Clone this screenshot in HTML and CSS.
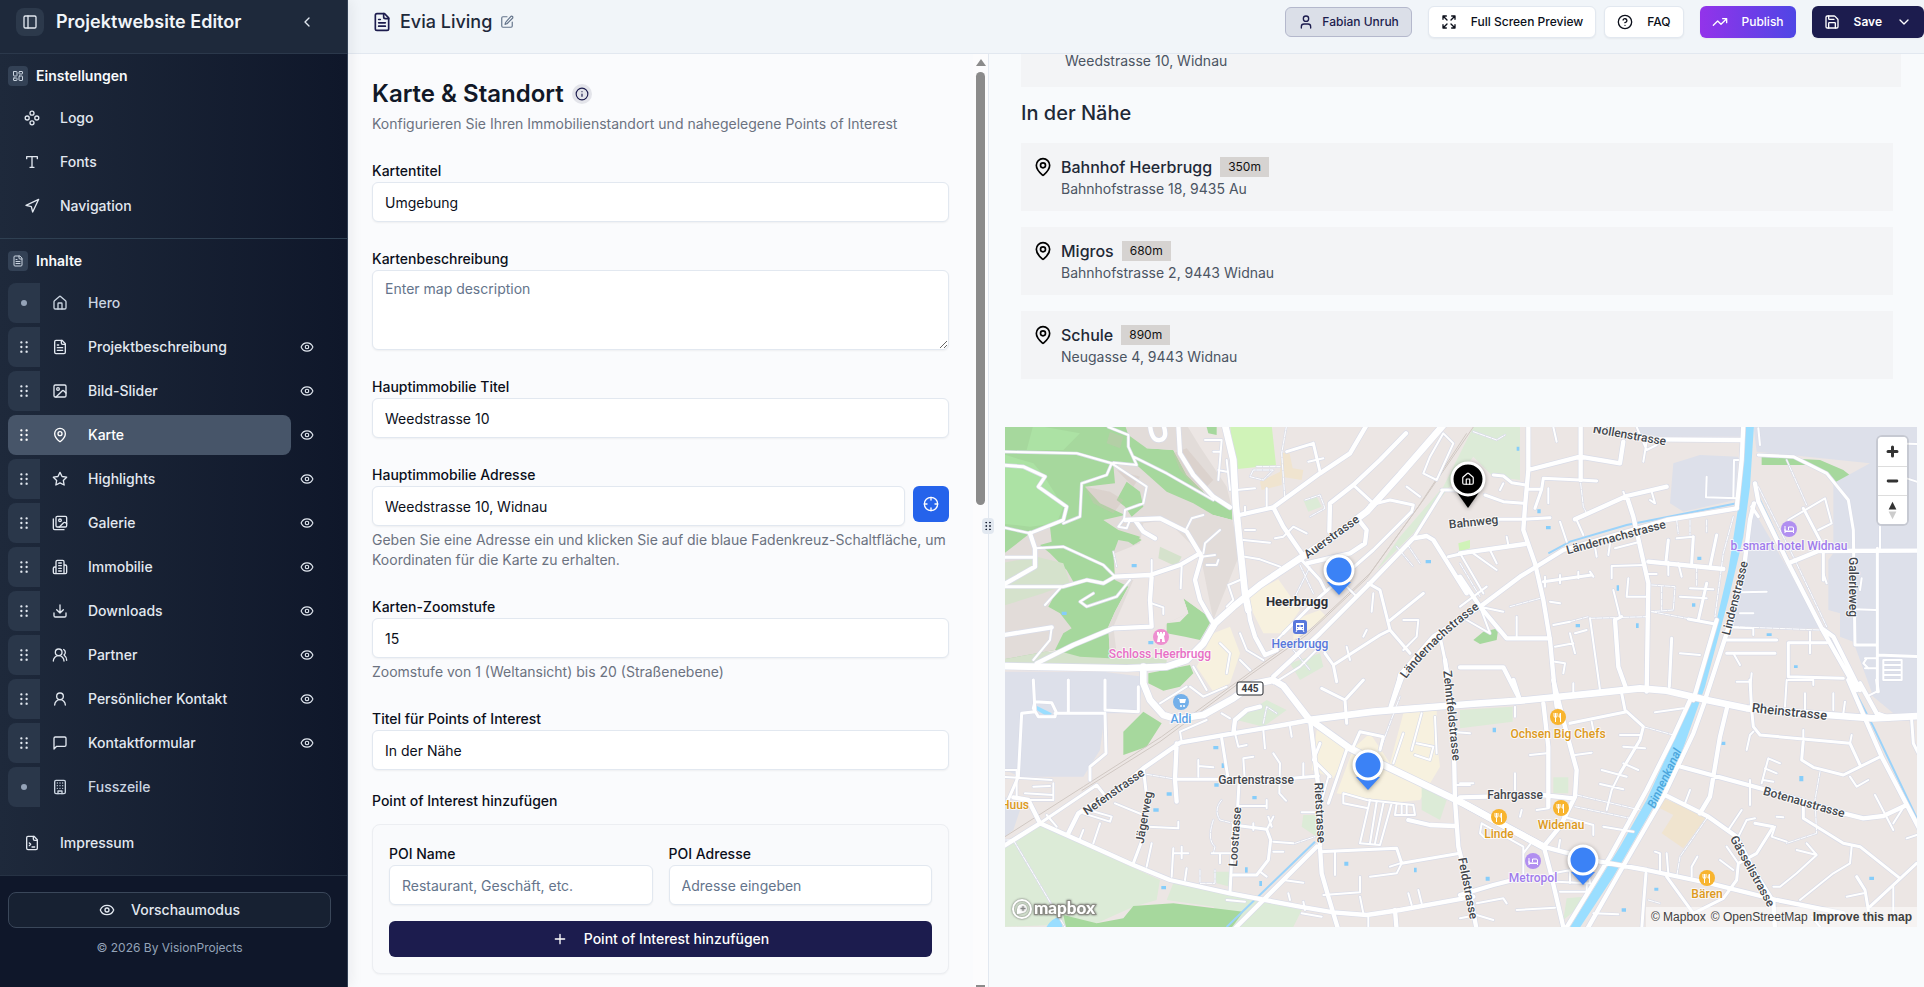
FILE: index.html
```html
<!DOCTYPE html>
<html lang="de">
<head>
<meta charset="utf-8">
<title>Projektwebsite Editor</title>
<link rel="stylesheet" href="styles.css">
</head>
<body>
<svg class="defs" aria-hidden="true">
  <symbol id="i-panel" viewBox="0 0 24 24"><rect x="3" y="3" width="18" height="18" rx="2"/><path d="M9 3v18"/></symbol>
  <symbol id="i-left" viewBox="0 0 24 24"><path d="m15 18-6-6 6-6"/></symbol>
  <symbol id="i-down" viewBox="0 0 24 24"><path d="m6 9 6 6 6-6"/></symbol>
  <symbol id="i-dash" viewBox="0 0 24 24"><rect x="3" y="3" width="7" height="9" rx="1"/><rect x="14" y="3" width="7" height="5" rx="1"/><rect x="14" y="12" width="7" height="9" rx="1"/><rect x="3" y="16" width="7" height="5" rx="1"/></symbol>
  <symbol id="i-comp" viewBox="0 0 24 24"><circle cx="12" cy="4.8" r="3"/><circle cx="12" cy="19.2" r="3"/><circle cx="4.8" cy="12" r="3"/><circle cx="19.2" cy="12" r="3"/></symbol>
  <symbol id="i-type" viewBox="0 0 24 24"><path d="M4 7V4h16v3M9 20h6M12 4v16"/></symbol>
  <symbol id="i-nav" viewBox="0 0 24 24"><path d="m3 11 19-9-9 19-2-8z"/></symbol>
  <symbol id="i-file" viewBox="0 0 24 24"><path d="M15 2H6a2 2 0 0 0-2 2v16a2 2 0 0 0 2 2h12a2 2 0 0 0 2-2V7z"/><path d="M14 2v4a2 2 0 0 0 2 2h4M10 9H8M16 13H8M16 17H8"/></symbol>
  <symbol id="i-home" viewBox="0 0 24 24"><path d="M15 21v-8a1 1 0 0 0-1-1h-4a1 1 0 0 0-1 1v8"/><path d="M3 10a2 2 0 0 1 .7-1.5l7-6a2 2 0 0 1 2.6 0l7 6A2 2 0 0 1 21 10v9a2 2 0 0 1-2 2H5a2 2 0 0 1-2-2z"/></symbol>
  <symbol id="i-image" viewBox="0 0 24 24"><rect x="3" y="3" width="18" height="18" rx="2"/><circle cx="9" cy="9" r="2"/><path d="m21 15-3.1-3.1a2 2 0 0 0-2.8 0L6 21"/></symbol>
  <symbol id="i-pin" viewBox="0 0 24 24"><path d="M20 10c0 5-5.5 10.200-7.400 11.800a1 1 0 0 1-1.200 0C9.500 20.200 4 15 4 10a8 8 0 0 1 16 0"/><circle cx="12" cy="10" r="3"/></symbol>
  <symbol id="i-star" viewBox="0 0 24 24"><path d="m12 2 3.100 6.300 6.900 1-5 4.900 1.200 6.800L12 17.800 5.800 21 7 14.200 2 9.300l6.900-1z"/></symbol>
  <symbol id="i-images" viewBox="0 0 24 24"><path d="M18 22H4a2 2 0 0 1-2-2V6"/><path d="m22 13-1.300-1.300a2.400 2.400 0 0 0-3.400 0L11 18"/><circle cx="12" cy="8" r="2"/><rect x="6" y="2" width="16" height="16" rx="2"/></symbol>
  <symbol id="i-build2" viewBox="0 0 24 24"><path d="M6 22V4a2 2 0 0 1 2-2h8a2 2 0 0 1 2 2v18ZM6 12H4a2 2 0 0 0-2 2v6a2 2 0 0 0 2 2h2M18 9h2a2 2 0 0 1 2 2v9a2 2 0 0 1-2 2h-2M10 6h4M10 10h4M10 14h4M10 18h4"/></symbol>
  <symbol id="i-dl" viewBox="0 0 24 24"><path d="M21 15v4a2 2 0 0 1-2 2H5a2 2 0 0 1-2-2v-4M7 10l5 5 5-5M12 15V3"/></symbol>
  <symbol id="i-users" viewBox="0 0 24 24"><path d="M18 21a8 8 0 0 0-16 0"/><circle cx="10" cy="8" r="5"/><path d="M22 20c0-3.400-2-6.500-4-8a5 5 0 0 0-.5-8.300"/></symbol>
  <symbol id="i-user" viewBox="0 0 24 24"><circle cx="12" cy="8" r="5"/><path d="M20 21a8 8 0 0 0-16 0"/></symbol>
  <symbol id="i-usersq" viewBox="0 0 24 24"><circle cx="12" cy="7" r="4"/><path d="M19 21v-2a4 4 0 0 0-4-4H9a4 4 0 0 0-4 4v2"/></symbol>
  <symbol id="i-msg" viewBox="0 0 24 24"><path d="M21 15a2 2 0 0 1-2 2H7l-4 4V5a2 2 0 0 1 2-2h14a2 2 0 0 1 2 2z"/></symbol>
  <symbol id="i-build" viewBox="0 0 24 24"><rect x="4" y="2" width="16" height="20" rx="2"/><path d="M9 22v-4h6v4M8 6h.01M16 6h.01M12 6h.01M12 10h.01M12 14h.01M16 10h.01M16 14h.01M8 10h.01M8 14h.01"/></symbol>
  <symbol id="i-term" viewBox="0 0 24 24"><path d="M15 2H6a2 2 0 0 0-2 2v16a2 2 0 0 0 2 2h12a2 2 0 0 0 2-2V7z"/><path d="M14 2v4a2 2 0 0 0 2 2h4M8 16l2-2-2-2M12 18h4"/></symbol>
  <symbol id="i-eye" viewBox="0 0 24 24"><path d="M2.100 12.300a1 1 0 0 1 0-.7 10.700 10.700 0 0 1 19.800 0 1 1 0 0 1 0 .7 10.700 10.700 0 0 1-19.800 0"/><circle cx="12" cy="12" r="3"/></symbol>
  <symbol id="i-grip" viewBox="0 0 24 24"><g fill="currentColor"><circle cx="7.500" cy="4" r="1"/><circle cx="7.500" cy="12" r="1"/><circle cx="7.500" cy="20" r="1"/><circle cx="16.500" cy="4" r="1"/><circle cx="16.500" cy="12" r="1"/><circle cx="16.500" cy="20" r="1"/></g></symbol>
  <symbol id="i-edit" viewBox="0 0 24 24"><path d="M12 3H5a2 2 0 0 0-2 2v14a2 2 0 0 0 2 2h14a2 2 0 0 0 2-2v-7"/><path d="M18.400 2.600a2.100 2.100 0 0 1 3 3l-9 9a2 2 0 0 1-.9.500l-2.900.9.900-2.900a2 2 0 0 1 .5-.9z"/></symbol>
  <symbol id="i-info" viewBox="0 0 24 24"><circle cx="12" cy="12" r="10"/><path d="M12 16v-4M12 8h.01"/></symbol>
  <symbol id="i-expand" viewBox="0 0 24 24"><path d="m15 15 6 6M15 9l6-6M21 16v5h-5M21 8V3h-5M3 16v5h5M3 21l6-6M3 8V3h5M9 9 3 3"/></symbol>
  <symbol id="i-help" viewBox="0 0 24 24"><circle cx="12" cy="12" r="10"/><path d="M9.100 9a3 3 0 0 1 5.800 1c0 2-3 3-3 3M12 17h.01"/></symbol>
  <symbol id="i-trend" viewBox="0 0 24 24"><path d="m22 7-8.500 8.500-5-5L2 17M16 7h6v6"/></symbol>
  <symbol id="i-save" viewBox="0 0 24 24"><path d="M15.200 3a2 2 0 0 1 1.400.6l3.800 3.800a2 2 0 0 1 .6 1.400V19a2 2 0 0 1-2 2H5a2 2 0 0 1-2-2V5a2 2 0 0 1 2-2z"/><path d="M17 21v-7a1 1 0 0 0-1-1H8a1 1 0 0 0-1 1v7M7 3v4a1 1 0 0 0 1 1h7"/></symbol>
  <symbol id="i-cross" viewBox="0 0 24 24"><circle cx="12" cy="12" r="10"/><path d="M22 12h-4M6 12H2M12 6V2M12 22v-4"/></symbol>
  <symbol id="i-plus" viewBox="0 0 24 24"><path d="M5 12h14M12 5v14"/></symbol>
</svg>
<div class="app">
  <aside class="sidebar">
    <header class="side-head">
      <span class="logo-box"><svg class="ic"><use href="#i-panel"/></svg></span>
      <h1>Projektwebsite Editor</h1>
      <button class="icon-btn" aria-label="Einklappen"><svg class="ic"><use href="#i-left"/></svg></button>
    </header>
    <nav class="side-nav">
      <section class="side-section">
        <h2><span class="mini"><svg class="ic s12"><use href="#i-dash"/></svg></span>Einstellungen</h2>
        <a class="link" href="#"><svg class="ic"><use href="#i-comp"/></svg>Logo</a>
        <a class="link" href="#"><svg class="ic"><use href="#i-type"/></svg>Fonts</a>
        <a class="link" href="#"><svg class="ic"><use href="#i-nav"/></svg>Navigation</a>
      </section>
      <section class="side-section">
        <h2><span class="mini"><svg class="ic s12"><use href="#i-file"/></svg></span>Inhalte</h2>
        <div class="row dim"><span class="grip"><i class="dot"></i></span><a class="entry" href="#"><svg class="ic"><use href="#i-home"/></svg>Hero</a></div>
        <div class="row"><span class="grip"><svg class="ic s14"><use href="#i-grip"/></svg></span><a class="entry" href="#"><svg class="ic"><use href="#i-file"/></svg>Projektbeschreibung</a><button class="icon-btn" aria-label="Sichtbar"><svg class="ic s14"><use href="#i-eye"/></svg></button></div>
        <div class="row"><span class="grip"><svg class="ic s14"><use href="#i-grip"/></svg></span><a class="entry" href="#"><svg class="ic"><use href="#i-image"/></svg>Bild-Slider</a><button class="icon-btn" aria-label="Sichtbar"><svg class="ic s14"><use href="#i-eye"/></svg></button></div>
        <div class="row active"><span class="grip"><svg class="ic s14"><use href="#i-grip"/></svg></span><a class="entry" href="#"><svg class="ic"><use href="#i-pin"/></svg>Karte</a><button class="icon-btn" aria-label="Sichtbar"><svg class="ic s14"><use href="#i-eye"/></svg></button></div>
        <div class="row"><span class="grip"><svg class="ic s14"><use href="#i-grip"/></svg></span><a class="entry" href="#"><svg class="ic"><use href="#i-star"/></svg>Highlights</a><button class="icon-btn" aria-label="Sichtbar"><svg class="ic s14"><use href="#i-eye"/></svg></button></div>
        <div class="row"><span class="grip"><svg class="ic s14"><use href="#i-grip"/></svg></span><a class="entry" href="#"><svg class="ic"><use href="#i-images"/></svg>Galerie</a><button class="icon-btn" aria-label="Sichtbar"><svg class="ic s14"><use href="#i-eye"/></svg></button></div>
        <div class="row"><span class="grip"><svg class="ic s14"><use href="#i-grip"/></svg></span><a class="entry" href="#"><svg class="ic"><use href="#i-build2"/></svg>Immobilie</a><button class="icon-btn" aria-label="Sichtbar"><svg class="ic s14"><use href="#i-eye"/></svg></button></div>
        <div class="row"><span class="grip"><svg class="ic s14"><use href="#i-grip"/></svg></span><a class="entry" href="#"><svg class="ic"><use href="#i-dl"/></svg>Downloads</a><button class="icon-btn" aria-label="Sichtbar"><svg class="ic s14"><use href="#i-eye"/></svg></button></div>
        <div class="row"><span class="grip"><svg class="ic s14"><use href="#i-grip"/></svg></span><a class="entry" href="#"><svg class="ic"><use href="#i-users"/></svg>Partner</a><button class="icon-btn" aria-label="Sichtbar"><svg class="ic s14"><use href="#i-eye"/></svg></button></div>
        <div class="row"><span class="grip"><svg class="ic s14"><use href="#i-grip"/></svg></span><a class="entry" href="#"><svg class="ic"><use href="#i-user"/></svg>Persönlicher Kontakt</a><button class="icon-btn" aria-label="Sichtbar"><svg class="ic s14"><use href="#i-eye"/></svg></button></div>
        <div class="row"><span class="grip"><svg class="ic s14"><use href="#i-grip"/></svg></span><a class="entry" href="#"><svg class="ic"><use href="#i-msg"/></svg>Kontaktformular</a><button class="icon-btn" aria-label="Sichtbar"><svg class="ic s14"><use href="#i-eye"/></svg></button></div>
        <div class="row dim"><span class="grip"><i class="dot"></i></span><a class="entry" href="#"><svg class="ic"><use href="#i-build"/></svg>Fusszeile</a></div>
        <a class="link last" href="#"><svg class="ic"><use href="#i-term"/></svg>Impressum</a>
      </section>
    </nav>
    <footer class="side-foot">
      <button class="preview-btn"><svg class="ic"><use href="#i-eye"/></svg>Vorschaumodus</button>
      <p>© 2026 By VisionProjects</p>
    </footer>
  </aside>

  <div class="main">
    <header class="toolbar">
      <div class="project"><svg class="ic s20"><use href="#i-file"/></svg><span>Evia Living</span><svg class="ic pencil"><use href="#i-edit"/></svg></div>
      <div class="actions">
        <button class="btn user"><svg class="ic"><use href="#i-usersq"/></svg>Fabian Unruh</button>
        <div class="pair">
          <button class="btn"><svg class="ic"><use href="#i-expand"/></svg>Full Screen Preview</button>
          <button class="btn"><svg class="ic"><use href="#i-help"/></svg>FAQ</button>
        </div>
        <button class="btn publish"><svg class="ic"><use href="#i-trend"/></svg>Publish</button>
        <button class="btn save"><svg class="ic"><use href="#i-save"/></svg>Save<svg class="ic"><use href="#i-down"/></svg></button>
      </div>
    </header>

    <div class="panes">
      <section class="editor">
        <form class="form">
          <div class="intro">
            <h2>Karte &amp; Standort <span class="info"><svg class="ic s14"><use href="#i-info"/></svg></span></h2>
            <p>Konfigurieren Sie Ihren Immobilienstandort und nahegelegene Points of Interest</p>
          </div>
          <div class="field"><label for="f1">Kartentitel</label><input id="f1" value="Umgebung"></div>
          <div class="field"><label for="f2">Kartenbeschreibung</label><textarea id="f2" placeholder="Enter map description"></textarea></div>
          <div class="field"><label for="f3">Hauptimmobilie Titel</label><input id="f3" value="Weedstrasse 10"></div>
          <div class="field"><label for="f4">Hauptimmobilie Adresse</label>
            <div class="inline"><input id="f4" value="Weedstrasse 10, Widnau"><button type="button" class="locate" aria-label="Koordinaten"><svg class="ic"><use href="#i-cross"/></svg></button></div>
            <p class="hint">Geben Sie eine Adresse ein und klicken Sie auf die blaue Fadenkreuz-Schaltfläche, um Koordinaten für die Karte zu erhalten.</p></div>
          <div class="field"><label for="f5">Karten-Zoomstufe</label><input id="f5" value="15"><p class="hint">Zoomstufe von 1 (Weltansicht) bis 20 (Straßenebene)</p></div>
          <div class="field"><label for="f6">Titel für Points of Interest</label><input id="f6" value="In der Nähe"></div>
          <fieldset class="poi">
            <legend>Point of Interest hinzufügen</legend>
            <div class="poi-card">
              <div class="two">
                <div class="field"><label for="f7">POI Name</label><input id="f7" placeholder="Restaurant, Geschäft, etc."></div>
                <div class="field"><label for="f8">POI Adresse</label><input id="f8" placeholder="Adresse eingeben"></div>
              </div>
              <button type="button" class="add"><svg class="ic"><use href="#i-plus"/></svg>Point of Interest hinzufügen</button>
            </div>
          </fieldset>
        </form>
        <div class="scroll" aria-hidden="true"><i class="up"></i><i class="thumb"></i><i class="rest"></i><i class="downarrow"></i></div>
        <span class="splitter"><svg class="ic s10"><use href="#i-grip"/></svg></span>
      </section>

      <section class="preview">
        <div class="places">
          <div class="main-place">Weedstrasse 10, Widnau</div>
          <h3>In der Nähe</h3>
          <ul>
            <li><svg class="ic s20"><use href="#i-pin"/></svg><div><h4>Bahnhof Heerbrugg <span>350m</span></h4><p>Bahnhofstrasse 18, 9435 Au</p></div></li>
            <li><svg class="ic s20"><use href="#i-pin"/></svg><div><h4>Migros <span>680m</span></h4><p>Bahnhofstrasse 2, 9443 Widnau</p></div></li>
            <li><svg class="ic s20"><use href="#i-pin"/></svg><div><h4>Schule <span>890m</span></h4><p>Neugasse 4, 9443 Widnau</p></div></li>
          </ul>
        </div>
        <div class="map">
          <svg class="canvas" viewBox="0 0 912 500" preserveAspectRatio="xMidYMid slice">
            <defs>
              <g id="roads">
                <g>
                  <path class="a" d="M675 15L700 120 707 250 718 360 735 520 745 570M1330 15L1200 165 1100 275 1000 350 900 415 780 495 700 560 645 610 610 670 560 720 500 740 380 745 0 738M430 740L430 790 450 840 490 885 530 897 610 885 700 835 760 792 820 780 850 798 925 895 1050 985 1140 1030 1400 1155 1500 1210 1630 1280M925 900L1120 875 1410 852 1560 842 1780 820 1920 805 2000 812 2120 840 2240 865 2480 885 2620 895 2760 888"/>
                  <path class="b" d="M745 560L750 600 765 650 795 705 830 690M535 15L540 100 580 165 640 230 690 262M718 285L820 262 960 160 1050 100 1100 15M1218 40L1140 120 1060 195 990 250 988 335M920 430L1050 400 1095 370 1100 330 1080 305M820 262L850 320 905 400M820 770L960 640 1110 490 1240 355 1280 348 1300 360 1400 520M1195 800L1200 765 1300 650 1440 560 1560 470 1690 390 2000 300 2210 265M375 300L480 295 560 335 605 410 585 480 600 540 640 610M455 470L450 540 455 620 340 625 220 675 110 730M0 500L105 440 105 385 90 340M345 470L450 465 540 435 600 400M0 647L155 622M405 300L430 335 465 355M450 15Q455 65 480 60T490 15"/>
                  <path class="c" d="M1060 195L1120 250M1110 255L1170 240 1240 255 1235 275 1120 390 960 530 850 640M1330 210L1240 355M1325 210L1370 210M1105 490L1140 510 1170 630 1140 645 1000 735 975 700M1170 630L1230 700M1165 605L1270 520M90 340L190 300 200 260 115 200 135 170 70 140 0 135M0 412L105 412M0 500L190 500 260 480 310 490 345 470M905 420L960 480 975 510M940 70L960 155M1345 410L1410 395M1000 735L1010 785 M860 95L940 70M1320 650L1350 790M1200 765L1170 860"/>
                  <path class="d" d="M0 95L230 100 335 130 320 165 245 190 240 290 190 310M335 130L440 200 430 250 375 270 372 300M325 21L385 45 385 80 410 135M340 128L410 135M400 110L500 160 640 240M105 385L190 380 310 435 345 470M390 480L350 530 260 560 240 545 280 520M180 505L135 555M545 440L542 505M455 550L490 562 490 582M0 320L90 340M610 285L575 295 555 335M660 330L615 370 610 400M730 360L810 368M735 330L765 330M735 410L780 418 840 440M720 480L685 495 700 540 680 560M925 125L970 115M710 210L765 205M800 205L800 260M735 260L735 285M825 355L850 350 880 320 920 340M655 180L665 60 615 60M640 95L660 95M655 150L680 155M680 120L690 210M455 420L455 470M620 435L650 435 655 420M605 410L645 405M155 622L150 660 100 720M1040 500L1070 530M950 690L900 740 820 790M1120 520L1115 575M790 720L740 690 720 640M580 740L620 810M720 720L750 750M660 670L690 700 680 760M850 640L830 660M1290 110L1330 40 1360 70 1310 180 1270 160zM1220 200L1260 230M1380 400L1450 520 M1210 600L1255 600 1250 650 1210 690M1100 630L1090 650M1040 680L1050 720M370 300L355 320 380 325 390 300"/>
                  <path class="e" d="M860 15L845 100 855 240M760 150L750 170 790 180 820 150zM770 140L840 140M915 240L960 225 975 265 930 290M900 435L940 520M930 440L870 560M340 395L350 440M880 690L930 750M1190 380L1240 440M1220 370L1260 430"/>
                </g>
                <g transform="translate(0 780)">
                  <path class="b" d="M930 120L850 135 700 160 540 188 430 265 370 315 235 400 205 460M0 505L120 430 300 510 400 555 510 600 690 640 900 680 1000 697 1100 705 1200 690 1420 650M40 352L85 360 120 430M930 120L940 200 955 320 960 500 965 580 985 650 1015 750M1335 -60L1360 120 1365 360 1375 500 1410 640 1430 750M530 190L525 298 530 365M700 750L950 500M1225 420L1290 435 1365 438M700 160L705 120 740 90 780 80M1185 690L1190 750"/>
                  <path class="c" d="M525 298L660 298M875 295L955 288M430 265L440 350M430 470L400 550M665 175L685 300M717 310L712 400M700 440L690 640M700 435L800 448 812 480 805 540 770 585 700 585M960 515L1190 505 1205 550 1380 520M100 0L105 95 65 100 55 290 20 370M105 65L155 68 168 95 165 110 115 110 100 85zM165 100L315 100M205 0V95M315 0V90L415 95V20M315 100L318 220 270 260 270 300M120 430L290 315 310 340M960 190L940 240 990 290M1040 210L985 370M1060 200L1080 155 1150 170 1140 210M965 25L1035 60 1090 0M1035 60L1040 130M1220 -40L1175 80"/>
                  <path class="d" d="M0 290L155 300M0 270H50V350M160 310V360H90M75 340L160 345M100 320L150 318M545 185L540 155 620 120M480 70L560 20M570 20L610 50 680 20M735 310L730 235 760 230M820 220L840 250 838 340 858 362M595 240V290M595 258L640 262M715 378H800V360M445 440L535 445V425M345 370L430 405M820 485L880 490M455 490L440 560M520 505L515 590M520 520H565M545 500V535M850 600L910 608M905 397H950M1005 515V585M970 645L1080 637 1080 590M1030 340L1100 360 1240 375 1245 405 1185 405 1190 370M1030 340L1030 370 1105 385M1110 360L1080 490 1140 495 1175 370M1130 365L1110 490M1150 370L1125 490M1205 375V405M1220 375V405M1180 250L1210 160M1235 210L1265 100M1250 190L1300 200 1290 240 1245 225M1305 110L1310 220M985 290L960 380M265 390L335 410 330 425 250 400M300 430L280 490M250 450L240 475M560 565L555 600M680 660L735 665M870 660L865 640M910 665L915 690M1110 590L1190 580 1205 550M1255 630L1265 670M1225 640L1235 675M905 700L965 710M1080 650L1090 700M140 405L170 440M790 150L795 205M870 140L875 170M705 160L715 200 740 195M635 520H690M660 520V550M800 450L820 410M805 410L815 440M760 430V450M800 370V385M820 515H850M780 575L800 590M910 250V290M1365 315H1410M1350 155L1410 160M1170 560L1200 550M1105 710V741M665 100L690 115"/>
                  <path class="e" d="M440 283L530 298M665 360Q640 390 660 420L700 430M640 420Q620 480 645 500L640 520M600 570V610H645V570M885 490L945 470M790 130L800 80 830 100M0 480L40 480 200 750M1140 210L1200 50"/>
                </g>
                <g transform="translate(1380 0)">
                  <path class="b" d="M205 15L205 150 195 260 190 330 225 430 250 540 270 660 285 820 290 860M362 15L362 180M205 150L360 110 480 130 490 65M0 400L195 372M345 298L500 228 620 200M500 228L520 290 565 490 560 815M565 425L790 447M850 15L845 120 830 265M882 250L870 300 850 460 800 640 735 840M770 600L700 840M885 190L895 245 985 430 1085 625 1190 810M1085 625L1120 650 1200 810M580 58L840 60M0 470L60 560 140 655 270 655M465 600L475 740 500 810M0 742L130 742 175 830M985 430L1075 393 1380 392"/>
                  <path class="c" d="M100 165L130 168 155 188 200 195M75 225L130 245 190 250M200 208H245L250 175 360 180 410 183M115 298L190 298 270 293M625 360L618 425M700 350L695 430M770 345L750 440M250 485L395 465M895 105L1000 110 1100 160 1165 240 1180 330 1185 675 1250 675M1252 385V815M1252 705L1380 710M1030 265L1090 380 1090 480M635 655L628 800M685 597L765 612M740 490L715 600M800 660H950M800 700H945M1100 668H985V770L1150 775M485 590L465 600M245 208L225 265M875 260L895 290"/>
                  <path class="d" d="M985 300L1095 235 1115 310 1075 330M650 355L700 350M740 170L738 232 830 235M835 120H822L820 230M845 517L920 515M800 622L880 625V645M840 580H880M300 305L320 365M350 300L370 345M455 475V438L555 435M505 475L500 530 560 530M460 510L480 590M280 615L330 605M285 680L340 670M390 595L420 810M660 530L740 535M690 505L760 508M660 700L720 705M820 700L840 735M875 760L870 810M830 785H870M465 385L540 365M450 370L445 405M405 380L410 410M490 215L495 228M575 215L585 250 570 240M550 125L560 65M280 21L290 65M530 21L560 90 590 75M265 250V205M255 470V500M300 465V490M355 455V475M390 455L400 470M565 462H590M625 425V465M655 430L665 470M270 545L300 550M285 725L315 730 310 760M330 640L345 700M345 640L380 630M1050 635V700M1215 715H1250M1215 745H1250M1220 715L1210 730 1225 745M1270 720H1325V780H1270zM1270 735H1325M1270 750H1325M1270 765H1325M895 25L900 75M1300 70L1370 72M1185 568L1250 570M1205 475L1200 510M1260 320V385M1340 175L1370 185M1090 460L1100 490M170 590V650M0 560L80 500M20 600L90 640 60 560 130 575M40 400L110 450M90 390L110 430M140 350L145 375M120 210L130 190"/>
                  <path class="e" d="M362 190L370 260 380 280M40 35L110 60 135 45M980 120L1040 255M895 200L1000 410 1100 620M820 290L790 400 765 590M650 300L655 340M690 300V345M740 300V340M575 495L645 500 640 570 575 575M605 500V570M575 575L680 595M390 595L560 590M330 605L385 590M820 620L1080 630M710 440V500M0 430L30 480 60 530M150 560L240 535"/>
                </g>
                <g transform="translate(1380 780)">
                  <path class="b" d="M695 50L640 170 560 330 450 530 315 750M738 55L700 160 610 350 500 540 380 750M250 70L265 200 265 380M295 60L320 160 350 270 345 350 300 440 255 495M0 352L85 350M245 345L340 355M250 500L420 545 560 570 750 610 950 660 1150 700M250 495L270 570 312 750M0 645L100 615 200 590M803 75L780 170 760 290 750 350 720 400M655 258L920 330 1150 400 1210 415 1270 408 1340 375M615 345L745 410 830 470 880 570 940 665 945 750M1165 0L1265 230 1380 450M1200 10L1250 100 1290 115M160 0L180 62M280 0L295 60"/>
                  <path class="a" d="M0 365L120 430 250 500"/>
                  <path class="c" d="M485 40L495 90 550 140 540 180 480 280M330 130L500 95M875 90L880 140 900 165 1170 190 1200 255M1030 180L1025 240 1060 262 1150 285 1265 228M1370 550L1230 680M1030 370V415L1150 490 1200 500 1320 595M1190 590L1215 630 1225 690M558 580L550 680 545 750M620 590L700 700 790 655 830 600 835 550 890 520 940 440 885 430M1355 120L1360 190 1375 220M870 0L875 90M1250 0L1255 35"/>
                  <path class="d" d="M480 280L455 330 440 390M425 270L500 290M480 165L540 165M490 200L555 205M420 312L490 328M490 250L535 270M585 97L670 85M395 125L400 150M165 80V110M170 690L285 683M310 410L400 435V465M430 440L520 455M400 700L475 703M280 580L385 560 390 610M290 605L385 610M300 635H380V610M330 570V610M585 515L600 520V575M620 520L625 580M695 590V560L712 530M905 310L925 235 960 250M915 265L950 280M910 300L940 305M690 330L675 370M845 390L805 450M835 470L860 420 885 415M1245 345L1300 450M1300 430L1335 375M1340 475L1370 465M780 540L820 570M800 500L835 550M945 440L935 470 980 485M1010 510L1070 525 1010 580 960 620 940 620M1020 660L1120 580 1170 550 1175 500M1040 490L1070 525M870 300V375M950 410L970 412M1055 710L1080 741M1300 620V720M1210 640L1160 650M1170 290L1190 320 1225 300M860 210L870 165 880 155M980 0L975 80M1035 40V90M1120 40V90M1155 65L1150 100M985 0H1060V15M1220 50L1250 35M340 10V40M210 225L260 220M345 225L395 218M165 280V330M0 310H40M0 715L50 705 100 720M50 670L130 655 140 670M65 430L60 460 75 475M65 430L190 500 190 580M185 390L180 410M190 520L220 480M230 390L265 385M300 480L295 510M1030 150V180M1175 165L1170 190"/>
                  <path class="e" d="M550 140L640 165M350 345L540 390M345 380L510 415M740 415L660 530 650 590M1080 275L1065 360 1070 460 980 490M565 660L600 670"/>
                </g>
              </g>
              <path id="curve" d="M401 252Q428 215 475 181"/>
              <g id="fork"><circle r="8"/><path d="M-4 -4v3q0 1.500 1.500 1.500V5M-1 -4v3q0 1.500-1.500 1.500M-2.500-4V0M2.500 5V-4q-1.500 1-1.500 4h1.500" fill="none" stroke="#fff"/></g>
              <g id="bed"><circle r="8"/><path d="M-4 4V-3M-4 2.500H4.500V4M-4 0V2H4.500V-1Q4.500-2 3-2H-.5V1" fill="none" stroke="#fff"/></g>
            </defs>
            <rect class="land" width="912" height="500"/>
            <g transform="scale(.33333) translate(-15 -21)">
              <path class="sage" d="M0 700L340 690 500 720 500 745H0z"/>
              <path class="wood" d="M0 15H440V85L520 90 560 165 620 225 695 260 697 300 640 285 600 300 560 420 420 480 385 500 345 575 325 620 330 715 240 710 165 690 0 720zM500 610L540 605 565 580 550 535 600 535 635 600 600 660 555 650 500 640zM445 760L570 735 580 760 540 800 490 812 445 790zM620 21H650V45L625 40z"/>
              <path class="wood2" d="M0 100L100 130 130 165 190 260 170 310 90 320 0 310zM100 15L240 40 190 90 80 90z"/>
              <path class="hill" d="M375 15H560L600 80 680 200 695 260 620 225 560 165 520 90 440 85 385 45zM340 135L410 135 500 215 580 250 640 285 697 300 720 400 640 600 550 535 565 580 500 610 460 700 330 715 325 620 345 575 385 500 345 480 340 400 355 360 410 370 420 350 355 330 310 300 375 285 300 250 255 200 345 190zM0 410L90 340 150 320 155 365 120 375 150 400 200 450 220 485 175 505 145 560 180 580 215 625 190 640 165 690 0 720z"/>
              <path class="land" d="M430 310L500 300 600 400 640 600 550 535 565 580 500 610 460 700 350 700 340 620 400 480 345 480 345 400 420 370z"/>
              <path class="sage" d="M0 430L110 410 190 430 210 490 130 520 0 560zM480 380L545 410 530 440 475 415z"/>
              <path class="wood" d="M380 185L420 215 430 260 395 290 375 260 350 240zM385 365L400 345 425 360 400 375z"/>
              <path class="shade" d="M330 35L370 50 360 85 320 70zM520 100L560 85 640 180 600 220 540 150zM255 200L330 215 370 240 340 280 280 250zM350 150L420 170 400 200z"/>
              <path class="lime" d="M690 15H815L828 135 705 148zM1375 370L1410 360V385L1378 395z"/>
              <path class="school" d="M842 100L868 97 878 145 910 150 905 180 845 170 845 195 785 210 780 185 840 155z"/>
              <path class="yellow" d="M745 525L835 478 900 570 850 640 790 640 750 560zM590 740L640 640 690 620 720 700 690 790 640 815zM880 600L960 570 980 590 880 660zM950 930L1050 985 1000 1075 935 1050zM1060 985L1110 940 1170 1030 1210 880 1310 870V960L1320 1040 1260 1140 1160 1150 1010 1120z"/>
              <path class="sage2" d="M910 240L950 230 965 260 925 275zM870 730L960 700 970 740 900 780zM710 900L800 840 860 870 790 920zM1420 21H1560V180L1480 170 1420 110 1240 340 1130 450 1200 350 1330 200zM0 1280L120 1215 480 1380 470 1440 400 1460 290 1510 0 1521zM520 1390L690 1425 905 1470 880 1521H700L640 1460 500 1440zM910 1185H950V1250L905 1220zM1265 1100L1340 1140 1320 1200 1265 1170zM1380 870L1538 860V905L1380 925zM1660 1072H1705V1120H1660zM1700 1435L1750 1430 1720 1475 1690 1500zM640 1355H690V1400L650 1390z"/>
              <path class="wood" d="M370 935L430 875 485 910 440 980 370 1005zM190 1485L290 1510 370 1495 400 1458 520 1450 730 1475 690 1530H200zM2285 110L2360 115 2460 120 2530 150 2580 190 2610 243 2560 235 2510 200 2470 150 2420 135 2285 135zM1420 660L1450 635 1495 625 1490 660 1440 672z"/>
              <path class="industry" d="M15 755H310L430 770 415 880 315 880 300 990 250 1070H60L15 1050zM15 1130L60 1170 40 1230 15 1250zM1910 15H2230V50H1990L1910 42zM2020 130L2100 105 2215 110 2205 240 2050 275 2010 250zM2260 15H2760V880H2680L2620 830 2560 665 2520 650V580L2485 570V420L2500 400V190L2610 130 2270 95zM2260 270L2360 440 2460 625 2185 620 2240 380z"/>
              <path class="water" d="M2238 15H2262L2250 200 2230 350 2185 540 2115 800 2030 1040 1840 1370 1735 1530H1705L1760 1440 1860 1280 1940 1140 2085 820 2150 600 2185 450 2215 260 2230 130zM135 1530Q150 1495 180 1490L190 1530zM105 855L155 880 150 895 110 870z"/>
              <path class="creek" d="M1645 400L1710 365 1880 315 2210 250M2275 230L2370 430 2480 650 2620 920 2760 1215M680 1521L945 1265"/>
              <path class="rail" d="M1420 21L1270 240 1110 460 930 630 760 750 485 950 250 1100 15 1250M1400 40L1255 260 1100 475 920 645 750 765 480 965 245 1112"/>
              <path class="pool" d="M395 432H410V442H395zM185 575H200V585H185zM445 663H460V673H445zM1277 420H1293V430H1277zM640 978H655V988H640zM665 1030H673V1044H665zM643 1090H656V1100H643zM500 1117H515V1127H500zM460 1165H476V1175H460zM757 1128H770V1138H757zM735 1342H743V1358H735zM778 1383H786V1398H778zM484 1398H498V1408H484zM1033 1325H1045V1337H1033zM1242 1343H1250V1357H1242zM1550 80H1558V92H1550zM1612 268H1622V280H1612zM1638 318H1652V328H1638zM1850 496H1857V512H1850zM1908 610H1916V624H1908zM1727 612H1740V622H1727zM2092 410H2104V420H2092zM2076 550H2086V560H2076zM2300 640H2315V648H2300zM2382 736H2393V744H2382zM2398 1068H2410V1084H2398zM2162 965H2176V975H2162zM1963 1403H1975V1412H1963zM1865 1465H1878V1475H1865zM2608 1370H2622V1380H2608zM1457 1370H1469V1382H1457zM1478 923H1488V937H1478z"/>
              <path class="school" d="M1980 1130L2120 1190 2050 1285 1985 1240 2020 1185 1980 1165z"/>
              <use href="#roads" class="casing"/>
              <use href="#roads" class="surface"/>
            </g>
            <g class="street">
              <text transform="translate(329 113) rotate(-36)">Auerstrasse</text>
              <text><textPath href="#curve" startOffset="50%">Ländernachstrasse</textPath></text>
              <text transform="translate(612 114) rotate(-15)">Ländernachstrasse</text>
              <text transform="translate(469 99) rotate(-6)">Bahnweg</text>
              <text transform="translate(624 12) rotate(10)">Nöllenstrasse</text>
              <text transform="translate(734 172) rotate(-76)">Lindenstrasse</text>
              <text transform="translate(844 160) rotate(90)">Galerieweg</text>
              <text transform="translate(443 289) rotate(84)">Zehntfeldstrasse</text>
              <text transform="translate(251 357)">Gartenstrasse</text>
              <text transform="translate(111 368) rotate(-35)">Nefenstrasse</text>
              <text transform="translate(143 391) rotate(-80)">Jägerweg</text>
              <text transform="translate(234 410) rotate(-86)">Loostrasse</text>
              <text transform="translate(311 386) rotate(87)">Rietstrasse</text>
              <text class="wide" transform="translate(784 289) rotate(6)">Rheinstrasse</text>
              <text transform="translate(510 372)">Fahrgasse</text>
              <text transform="translate(459 462) rotate(79)">Feldstrasse</text>
              <text transform="translate(744 446) rotate(61)">Gässelistrasse</text>
              <text transform="translate(798 379) rotate(16)">Botenaustrasse</text>
              <text class="canal" transform="translate(663 353) rotate(-65)">Binnenkanal</text>
              <text class="town" x="292" y="179">Heerbrugg</text>
            </g>
            <g class="spot">
              <text class="blue" x="295" y="221">Heerbrugg</text>
              <text class="pink" x="155" y="231">Schloss Heerbrugg</text>
              <text class="sky" x="176" y="296">Aldi</text>
              <text class="violet" x="784" y="123">b_smart hotel Widnau</text>
              <text class="violet" x="528" y="455">Metropol</text>
              <text class="amber" x="10" y="382">Huus</text>
              <text class="amber" x="553" y="311">Ochsen Big Chefs</text>
              <text class="amber" x="556" y="402">Widenau</text>
              <text class="amber" x="494" y="411">Linde</text>
              <text class="amber" x="702" y="471">Bären</text>
            </g>
            <g class="dots" fill="#f8b42e"><use href="#fork" x="553" y="290"/><use href="#fork" x="556" y="381"/><use href="#fork" x="494" y="390"/><use href="#fork" x="702" y="451"/></g>
            <g class="dots" fill="#b18ff0"><use href="#bed" x="784" y="102"/><use href="#bed" x="528" y="434"/></g>
            <g transform="translate(156 210)"><circle r="8" fill="#ee8fd0"/><path d="M-4-5h2v1.500h1V-5h2v1.500h1V-5h2v3L3-1 4 5H1V2H-1V5H-4L-3-1-4-2z" fill="#fff"/></g>
            <g transform="translate(176 275)"><circle r="8" fill="#74b0ea"/><path d="M-4-4h2L-1 1H4L5-3H-1.500z" fill="#fff"/><circle cx="0" cy="4" r="1" fill="#fff"/><circle cx="3" cy="4" r="1" fill="#fff"/></g>
            <g transform="translate(295 200)"><rect x="-7" y="-7" width="14" height="14" rx="3" fill="#5878dc"/><path d="M-4-4H4V3H-4z" fill="#fff"/><path d="M-3-2H-.5V0H-3zM.5-2H3V0H.5zM-3 1.200H-2V2H-3zM2 1.200H3V2H2z" fill="#5878dc"/><path d="M-3 3L-4 5M3 3L4 5" stroke="#fff"/></g>
            <g class="shield"><rect x="232" y="255" width="26" height="13" rx="2"/><text x="245" y="265">445</text></g>
            <g class="marker"><path d="M451 64H475L463 81z" fill="#000"/><circle cx="463" cy="52" r="16" fill="#000"/></g>
            <svg class="house" x="456" y="45" width="14" height="14"><use href="#i-home"/></svg>
            <g class="marker" fill="#3b82f6"><path d="M322 155H346L334 168z"/><circle cx="334" cy="143" r="14"/></g>
            <g class="marker" fill="#3b82f6"><path d="M351 350H375L363 363z"/><circle cx="363" cy="338" r="14"/></g>
            <g class="marker" fill="#3b82f6"><path d="M566 445H590L578 458z"/><circle cx="578" cy="433" r="14"/></g>
            <g class="brand"><circle cx="17" cy="482" r="9"/><path d="M12 487Q11 477 17 477A4.500 4.500 0 1 1 18 486Q15 487 12 487z"/><path class="spark" d="M18 479v5M15.500 481.500h5"/><text x="29" y="487">mapbox</text></g>
          </svg>
          <div class="zoom">
            <button aria-label="Zoom in"><svg viewBox="0 0 29 29"><path d="M14.500 10V19M10 14.500H19"/></svg></button>
            <button aria-label="Zoom out"><svg viewBox="0 0 29 29"><path d="M10 14.500H19"/></svg></button>
            <button aria-label="Reset bearing"><svg viewBox="0 0 29 29"><path class="n" d="M10.500 14 14.500 6 18.500 14z"/><path class="s" d="M10.500 16 14.500 24 18.500 16z"/></svg></button>
          </div>
          <div class="credit"><a href="#">© Mapbox</a><a href="#">© OpenStreetMap</a><a href="#" class="improve">Improve this map</a></div>
        </div>
      </section>
    </div>
  </div>
</div>
</body>
</html>
```
FILE: styles.css
```css
* { box-sizing: border-box; }
body { margin: 0; font-family: Inter, "Liberation Sans", sans-serif; font-size: 14px; line-height: 20px; color: #0b0f1a; }
h1, h2, h3, h4, p, ul { margin: 0; padding: 0; }
button, input, textarea { font: inherit; }
button { cursor: pointer; }
a { color: inherit; text-decoration: none; }
.defs { position: absolute; width: 0; height: 0; }
.ic { width: 16px; height: 16px; flex: none; fill: none; stroke: currentColor; stroke-width: 2; stroke-linecap: round; stroke-linejoin: round; }
.s10 { width: 10px; height: 10px; }
.s12 { width: 12px; height: 12px; }
.s14 { width: 14px; height: 14px; }
.s20 { width: 20px; height: 20px; }
.app { display: flex; height: 100vh; overflow: hidden; }

/* Sidebar */
.sidebar { width: 348px; flex: none; display: flex; flex-direction: column; background: linear-gradient(to right, #1e293b, #0f172a); border-right: 1px solid #334155; color: #e2e8f0; z-index: 1; box-shadow: 4px 0 12px rgba(15, 23, 42, .06); }
.side-head { display: flex; align-items: center; gap: 12px; height: 54px; padding: 0 24px 10px 16px; background: #1e293b; border-bottom: 1px solid #2b384b; }
.side-head h1 { flex: 1; font-size: 18px; line-height: 28px; font-weight: 600; color: #f1f5f9; }
.logo-box { display: grid; place-items: center; width: 28px; height: 28px; border-radius: 8px; background: #2c394b; }
.icon-btn { display: grid; place-items: center; width: 32px; height: 32px; padding: 0; border: 0; background: none; color: #e2e8f0; }
.side-section { display: flex; flex-direction: column; gap: 4px; padding: 12px 24px 12px 8px; border-bottom: 1px solid #2f4052; }
.side-section:last-child { border-bottom: 0; }
.side-section h2 { display: flex; align-items: center; gap: 8px; margin-bottom: 8px; font-size: 14px; line-height: 20px; font-weight: 600; color: #f8fafc; }
.mini { display: grid; place-items: center; width: 20px; height: 20px; border-radius: 4px; background: #334155; color: #cbd5e1; }
.link { display: flex; align-items: center; gap: 20px; height: 40px; padding: 0 16px; font-weight: 500; }
.last { margin-top: 12px; }
.row { display: flex; align-items: center; height: 40px; font-weight: 500; }
.grip { display: grid; place-items: center; width: 32px; height: 40px; border-radius: 8px 0 0 8px; background: #2a374a; }
.dot { width: 6px; height: 6px; border-radius: 50%; background: #94a3b8; }
.entry { flex: 1; display: flex; align-items: center; gap: 20px; height: 40px; padding: 0 12px; border-radius: 0 8px 8px 0; }
.dim { color: #cbd5e1; }
.active .grip, .active .entry { background: #475569; color: #fff; }
.side-foot { flex: 1; padding: 16px 16px 0 8px; background: #0f172a; border-top: 1px solid #263244; text-align: center; font-size: 12px; line-height: 16px; color: #94a3b8; }
.preview-btn { display: flex; align-items: center; justify-content: center; gap: 16px; width: 100%; height: 36px; margin-bottom: 12px; border: 1px solid #3a475a; border-radius: 8px; background: #172132; color: #e2e8f0; font-size: 14px; font-weight: 500; }

/* Toolbar */
.main { flex: 1; min-width: 0; display: flex; flex-direction: column; background: #f9fafc; }
.toolbar { flex: none; display: flex; align-items: center; justify-content: space-between; height: 54px; padding: 0 0 10px 24px; background: #f1f5f9; border-bottom: 1px solid #e2e8f0; }
.project { display: flex; align-items: center; gap: 8px; font-size: 18px; line-height: 28px; color: #1e293b; font-weight: 500; }
.project .s20 { color: #1c1c4e; }
.project .pencil { width: 14px; height: 14px; color: #64748b; }
.actions { display: flex; align-items: center; gap: 16px; }
.pair { display: flex; gap: 8px; }
.btn { display: flex; align-items: center; gap: 14px; height: 32px; padding: 0 12px; border: 1px solid #e2e8f0; border-radius: 6px; background: #fff; box-shadow: 0 1px 2px rgba(0, 0, 0, .05); color: #0b0f1a; font-size: 12px; line-height: 16px; font-weight: 500; white-space: nowrap; }
.user { gap: 8px; height: 30px; border-color: #b4b8cc; background: #dbdfe8; color: #1c1c4e; box-shadow: none; }
.publish { border: 0; background: linear-gradient(to right, #9333ea, #4f46e5); color: #fff; }
.save { border: 0; background: #1c1c4e; color: #fff; font-weight: 600; }

/* Editor */
.panes { flex: 1; min-height: 0; display: grid; grid-template-columns: 641fr 935fr; }
.editor { position: relative; display: flex; min-height: 0; border-right: 1px solid #e2e8f0; background: #fafbfd; }
.form { flex: 1; min-width: 0; display: flex; flex-direction: column; gap: 24px; padding: 24px; overflow: hidden; }
.intro h2 { display: flex; align-items: center; gap: 8px; font-size: 24px; line-height: 32px; font-weight: 600; color: #111827; }
.intro p { margin-top: 4px; }
.intro p, .hint { color: #6b7280; }
.info { display: grid; place-items: center; width: 20px; height: 20px; border-radius: 50%; background: #e3e4ea; color: #1c1c4e; }
.field { display: flex; flex-direction: column; min-width: 0; }
.field label { padding-top: 2px; line-height: 22px; font-weight: 500; }
input, textarea { width: 100%; height: 40px; padding: 8px 12px; border: 1px solid #e2e8f0; border-radius: 6px; background: #fff; color: #0b0f1a; box-shadow: 0 1px 2px rgba(0, 0, 0, .05); }
textarea { height: 80px; resize: vertical; display: block; }
::placeholder { color: #64748b; }
.inline { display: flex; gap: 8px; }
.locate { flex: none; display: grid; place-items: center; width: 36px; height: 36px; padding: 0; border: 0; border-radius: 6px; background: #2563eb; color: #fff; }
.hint { margin-top: 4px; }
.poi { margin: 0; padding: 0; border: 0; min-width: 0; }
.poi legend { padding: 0; line-height: 14px; font-weight: 500; }
.poi-card { margin-top: 16px; padding: 16px; border: 1px solid #eceef2; border-radius: 8px; background: #f9fafc; box-shadow: 0 1px 2px rgba(0, 0, 0, .04); }
.two { display: grid; grid-template-columns: 1fr 1fr; gap: 16px; margin-bottom: 16px; }
.add { display: flex; align-items: center; justify-content: center; gap: 16px; width: 100%; height: 36px; border: 0; border-radius: 6px; background: #1c1c4e; color: #fff; font-weight: 500; }
.scroll { flex: none; display: flex; flex-direction: column; align-items: center; width: 15px; padding-top: 5px; background: #fcfcfd; }
.up { border: 5px solid transparent; border-top: 0; border-bottom: 7px solid #8b8b8b; margin-bottom: 6px; }
.thumb { flex: 433; width: 9px; border-radius: 5px; background: #8b8b8b; }
.rest { flex: 480; }
.downarrow { width: 9px; height: 2px; background: #8b8b8b; }
.splitter { position: absolute; right: -6px; top: calc(50% - 3px); z-index: 1; display: grid; place-items: center; width: 12px; height: 16px; border-radius: 4px; background: #e2e8f0; color: #0f172a; }

/* Preview */
.preview { min-width: 0; background: #f8fafc; overflow: hidden; }
.places { padding: 0 23px 0 32px; }
.main-place { padding: 0 0 16px 44px; height: 33px; line-height: 14px; background: #f3f4f6; color: #4b5563; }
.places h3 { margin: 12px 0 16px; font-size: 20px; line-height: 28px; font-weight: 500; color: #1f2937; }
.places ul { display: flex; flex-direction: column; gap: 16px; margin-right: 8px; list-style: none; }
.places li { display: flex; gap: 8px; padding: 12px; background: #f3f4f6; color: #000; }
.places li .ic { margin-top: 2px; }
.places h4 { display: flex; align-items: center; gap: 8px; font-size: 16px; line-height: 24px; font-weight: 500; color: #1f2937; }
.places h4 span { padding: 2px 8px; background: #d6d3d1; color: #111; font-size: 12px; line-height: 16px; font-weight: 400; }
.places p { color: #4b5563; }
.map { position: relative; height: 500px; margin: 48px 7px 0 16px; overflow: hidden; }
.canvas { display: block; width: 100%; height: 100%; }
.land { fill: #ece6e4; }
.hill { fill: #e2dcd9; }
.shade { fill: #cdbfb8; opacity: .35; }
.sage { fill: #d5e2cc; }
.sage2 { fill: #dcebd7; }
.wood { fill: #a6d89d; }
.wood2 { fill: #ace2a4; }
.lime { fill: #d0f3b8; }
.school { fill: #f0e4cf; }
.yellow { fill: #f7f1df; }
.industry { fill: #dde0ea; }
.water { fill: #9adeff; }
.pool { fill: #86cdfa; }
.creek { fill: none; stroke: #9bd3fa; stroke-width: 6; }
.rail { fill: none; stroke: #d0c8c3; stroke-width: 3; }
.casing, .surface { fill: none; stroke-linecap: round; stroke-linejoin: round; }
.casing { --edge: 4px; stroke: #d9dce8; }
.surface { --edge: 0px; stroke: #fff; }
.a { stroke-width: calc(20px + var(--edge)); }
.b { stroke-width: calc(13px + var(--edge)); }
.c { stroke-width: calc(9px + var(--edge)); }
.d { stroke-width: calc(6px + var(--edge)); }
.e { stroke-width: calc(3px + var(--edge)); stroke-dasharray: 16 4; }
.street, .spot { font-family: Roboto, sans-serif; font-size: 12px; font-weight: 500; text-anchor: middle; paint-order: stroke; stroke: rgba(255, 255, 255, .7); stroke-width: 2; stroke-linejoin: round; }
.street { fill: #43474d; }
.street .wide { font-size: 13px; }
.town { font-size: 13px; font-weight: 700; fill: #2c2f35; }
.canal { fill: #4ba6dc; stroke: none; font-style: italic; }
.blue { fill: #5878dc; }
.pink { fill: #e86fc6; }
.sky { fill: #5b9fe6; }
.violet { fill: #a07cec; }
.amber { fill: #dd9a1c; }
.shield rect { fill: #fff; stroke: #23262d; stroke-width: 1; }
.shield text { font-family: Roboto, sans-serif; font-size: 10px; font-weight: 700; text-anchor: middle; fill: #3a3d44; }
.marker { filter: drop-shadow(0 1px 2px rgba(0, 0, 0, .35)); }
.marker circle { stroke: #fff; stroke-width: 3; }
.house { fill: none; stroke: #fff; stroke-width: 2; stroke-linecap: round; stroke-linejoin: round; }
.brand circle { fill: none; stroke: #fff; stroke-width: 2; }
.brand circle, .brand path, .brand text { filter: drop-shadow(0 0 1px #666); }
.brand path { fill: #fff; }
.brand .spark { fill: none; stroke: #888; }
.brand text { font-family: Lato, sans-serif; font-size: 17px; font-weight: 900; fill: #fff; paint-order: stroke; stroke: #8d8d86; stroke-width: 2; }
.zoom { position: absolute; top: 10px; right: 10px; width: 29px; border-radius: 4px; background: #fff; box-shadow: 0 0 0 2px rgba(0, 0, 0, .1); overflow: hidden; }
.zoom button { display: block; width: 29px; height: 29px; padding: 0; border: 0; background: #fff; }
.zoom button + button { border-top: 1px solid #ddd; }
.zoom svg { display: block; width: 100%; height: 100%; fill: none; stroke: #333; stroke-width: 3; stroke-linecap: round; }
.zoom .n { fill: #333; stroke: none; }
.zoom .s { fill: #ccc; stroke: none; }
.credit { position: absolute; right: 0; bottom: 0; display: flex; gap: 5px; padding: 0 5px; background: rgba(255, 255, 255, .5); font-family: "Liberation Sans", sans-serif; font-size: 12px; line-height: 20px; color: #404040; }
.improve { font-weight: 700; }
```
